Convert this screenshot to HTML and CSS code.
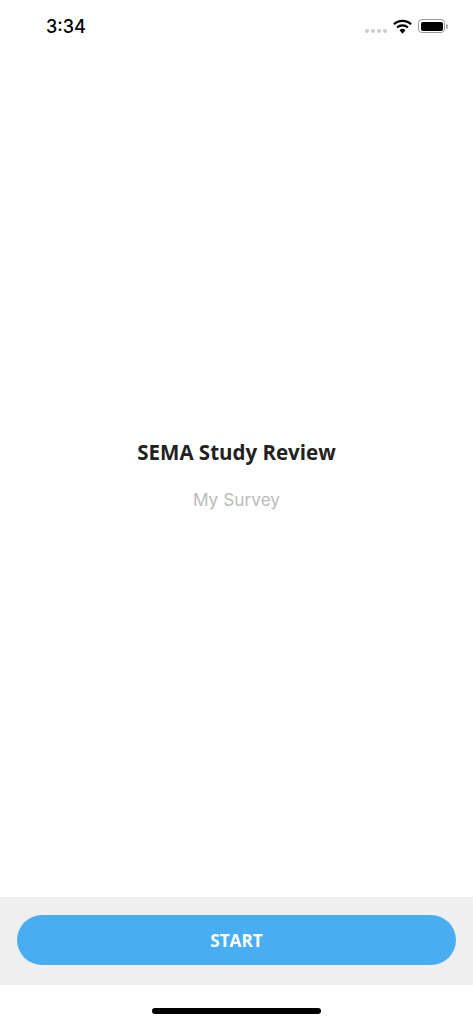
FILE: index.html
```html
<!DOCTYPE html>
<html lang="en">
<head>
    <meta charset="UTF-8">
    <meta name="viewport" content="width=device-width, initial-scale=1.0">
    <title>SEMA Study Review</title>
    <link rel="stylesheet" href="styles.css">
</head>
<body>

<div class="screen">
    <!-- Status bar -->
    <div class="status-bar">
        <span class="status-time">3:34</span>
        <div class="status-icons">
            <span class="signal-dots"><i></i><i></i><i></i><i></i></span>
            <svg class="wifi-icon" viewBox="0 0 20 15" aria-hidden="true">
                <path d="M1 5.2 A13 13 0 0 1 19 5.2" fill="none" stroke="#000" stroke-width="2.3"/>
                <path d="M4.3 8.6 A8.4 8.4 0 0 1 15.7 8.6" fill="none" stroke="#000" stroke-width="2.3"/>
                <path d="M10 15 L6.9 11.4 A4.6 4.6 0 0 1 13.1 11.4 Z" fill="#000"/>
            </svg>
            <span class="battery"><span class="battery-level"></span></span>
        </div>
    </div>

    <!-- Survey intro -->
    <main class="intro">
        <h1 class="intro-title">SEMA Study Review</h1>
        <p class="intro-subtitle">My Survey</p>
    </main>

    <div class="action-bar">
        <button class="start-button" type="button">START</button>
    </div>

    <div class="home-area">
        <span class="home-indicator"></span>
    </div>
</div>

</body>
</html>
```

FILE: styles.css
```css
* { box-sizing: border-box; }
body { margin: 0; background-color: #fff; font-family: "Open Sans", "Liberation Sans", sans-serif; }
.screen {
    display: flex;
    flex-direction: column;
    height: 1024px;
}
.status-bar {
    display: flex;
    justify-content: space-between;
    align-items: center;
    height: 52px;
    padding: 0 28px 0 46px;
}
.status-time {
    font-family: Inter, "Liberation Sans", sans-serif;
    font-size: 18px;
    font-weight: 500;
    color: #000;
}
.status-icons {
    display: flex;
    align-items: center;
}
.signal-dots {
    display: flex;
    gap: 2px;
    margin: 9px 6px 0 0;
}
.signal-dots i {
    width: 4px;
    height: 4px;
    border-radius: 50%;
    background-color: #ccc;
}
.wifi-icon {
    width: 19px;
    height: 15px;
    margin-right: 6px;
}
.battery {
    position: relative;
    width: 27px;
    height: 14px;
    padding: 1.5px;
    border: 1px solid #999;
    border-radius: 4px;
}
.battery::after {
    content: '';
    position: absolute;
    right: -4px;
    top: 3.5px;
    width: 2px;
    height: 5px;
    background-color: #aaa;
    border-radius: 0 2px 2px 0;
}
.battery-level {
    display: block;
    height: 100%;
    background-color: #000;
    border-radius: 2px;
}
.intro {
    flex: 1;
    display: flex;
    flex-direction: column;
    align-items: center;
    padding-top: 386px;
}
.intro-title {
    margin: 0;
    font-size: 20.5px;
    font-weight: 700;
    line-height: 28px;
    color: #222;
}
.intro-subtitle {
    margin: 20px 0 0;
    font-family: Inter, "Liberation Sans", sans-serif;
    font-size: 17.3px;
    font-weight: 400;
    line-height: 28px;
    color: #bbb;
}
.action-bar {
    height: 88px;
    padding: 18px 17px 20px;
    background-color: #efefef;
}
.start-button {
    display: block;
    width: 100%;
    height: 50px;
    border: none;
    border-radius: 25px;
    background-color: #48aef1;
    color: #fff;
    font-family: inherit;
    font-size: 17.2px;
    font-weight: 700;
}
.home-area {
    display: flex;
    justify-content: center;
    height: 39px;
    padding-top: 23px;
}
.home-indicator {
    width: 169px;
    height: 6px;
    border-radius: 3px;
    background-color: #000;
}
```
